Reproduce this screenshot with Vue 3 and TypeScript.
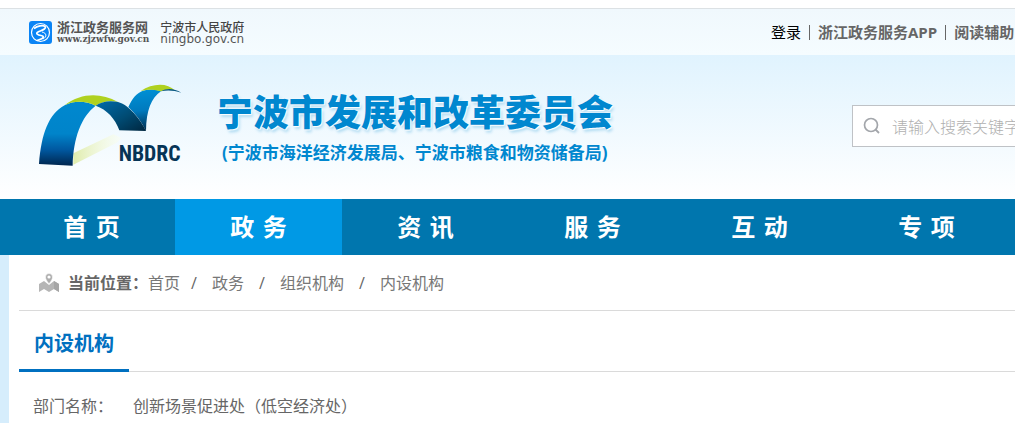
<script setup lang="ts">
import { ref } from 'vue'

const navItems: string[] = ['首 页', '政 务', '资 讯', '服 务', '互 动', '专 项']
const activeNav = ref<number>(1)
const crumbs: string[] = ['首页', '政务', '组织机构', '内设机构']
const keyword = ref<string>('')
</script>

<template>
  <div class="page">
    <div class="topbar">
      <div class="portals">
        <a class="portal service" href="#">
          <svg class="portal-mark" viewBox="0 0 23 23" aria-hidden="true">
            <rect width="23" height="23" rx="3" fill="#0a84f5" />
            <circle cx="11.5" cy="11.5" r="9" fill="none" stroke="#fff" stroke-width="1.2" />
            <path d="M5 7.500C8 5 14 3.500 16 5.500C18 8 12 9.500 9 11C6 12.500 9 14 12 14.500C16 15.200 15 17.500 8 19.500" fill="none" stroke="#fff" stroke-width="1.7" />
            <path d="M13 11C18 12 18 16 14 18" fill="none" stroke="#fff" stroke-width="1" />
          </svg>
          <span class="portal-text">
            <span class="service-name">浙江政务服务网</span>
            <span class="service-url">www.zjzwfw.gov.cn</span>
          </span>
        </a>
        <a class="portal city" href="#">
          <span class="city-name">宁波市人民政府</span>
          <span class="city-url">ningbo.gov.cn</span>
        </a>
      </div>
      <div class="links">
        <a class="login" href="#">登录</a>
        <a href="#">浙江政务服务APP</a>
        <a href="#">阅读辅助</a>
      </div>
    </div>

    <header class="banner">
      <a class="brand" href="#">
        <svg class="logo" viewBox="0 0 540 330" role="img" aria-label="NBDRC">
          <defs>
            <linearGradient id="left-arch" x1="0" y1="0" x2="0" y2="1">
              <stop offset="0" stop-color="#0088cf" />
              <stop offset="0.5" stop-color="#0084ca" />
              <stop offset="0.75" stop-color="#0058a0" />
              <stop offset="1" stop-color="#00264e" />
            </linearGradient>
            <linearGradient id="mid-arch" x1="0" y1="0" x2="1" y2="1">
              <stop offset="0" stop-color="#006bab" />
              <stop offset="0.55" stop-color="#004b73" />
              <stop offset="1" stop-color="#00263f" />
            </linearGradient>
            <linearGradient id="right-arch" x1="0.4" y1="0" x2="0.5" y2="1">
              <stop offset="0" stop-color="#0090d5" />
              <stop offset="0.5" stop-color="#007abe" />
              <stop offset="1" stop-color="#002c4d" />
            </linearGradient>
            <linearGradient id="beam" x1="0" y1="0" x2="1" y2="0">
              <stop offset="0" stop-color="#dfecac" />
              <stop offset="1" stop-color="#fcffee" stop-opacity="0.4" />
            </linearGradient>
          </defs>
          <path d="M160 250L280 193L305 204L290 218L160 284Z" fill="url(#beam)" />
          <path d="M57 282C64 191 86 132 134 106C164 90 201 94 227 107C184 139 160 204 158 287Z" fill="url(#left-arch)" />
          <path d="M134 106C184 68 242 68 294 96C268 91 244 96 227 107C201 94 164 90 134 106Z" fill="#afd11f" />
          <path d="M325 111C337 84 351 68 369 62C389 57 406 58 423 64C394 84 379 120 378 183C365 155 346 131 325 111Z" fill="url(#right-arch)" />
          <path d="M227 107C244 95 268 90 294 96C311 101 324 110 342 130C358 148 370 166 378 183L298 181C285 145 261 119 227 107Z" fill="url(#mid-arch)" />
          <path d="M362 63C398 38 443 38 464 61C449 56 434 58 423 64C404 58 385 57 362 63Z" fill="#afd11f" />
          <path d="M423 64C441 54 462 55 484 68C462 61 441 60 423 64Z" fill="#075780" />
          <text x="296" y="273" class="logo-letters">NBDRC</text>
        </svg>
        <span class="brand-text">
          <strong class="brand-title">宁波市发展和改革委员会</strong>
          <span class="brand-subtitle">(宁波市海洋经济发展局、宁波市粮食和物资储备局)</span>
        </span>
      </a>
      <form class="search" @submit.prevent>
        <svg class="search-icon" viewBox="0 0 18 18" aria-hidden="true">
          <circle cx="8" cy="8" r="6.500" fill="none" stroke="#a3a6ab" stroke-width="1.700" />
          <path d="M12.500 12.500L16 16" stroke="#a3a6ab" stroke-width="1.800" />
        </svg>
        <input v-model="keyword" type="text" aria-label="搜索" placeholder="请输入搜索关键字" />
      </form>
    </header>

    <nav class="nav">
      <a
        v-for="(item, i) in navItems"
        :key="item"
        href="#"
        :class="{ active: i === activeNav }"
        @click.prevent="activeNav = i"
      >{{ item }}</a>
    </nav>

    <div class="body">
      <main class="content">
        <div class="crumbs">
          <svg class="pin" viewBox="0 0 20 20" aria-hidden="true">
            <path d="M0 11L5 8L10 12L15 8L20 11V19L15 16L10 19L5 16L0 19Z" fill="#b5b5b5" />
            <path d="M15 8L20 11V19L15 16Z" fill="#a6a6a6" />
            <path d="M10 11C7 7 6.500 5.500 6.500 4A3.500 3.500 0 0 1 13.500 4C13.500 5.500 13 7 10 11Z" fill="#adadad" stroke="#fff" stroke-width="0.600" />
            <circle cx="10" cy="4" r="1.600" fill="#fff" />
          </svg>
          <strong>当前位置：</strong>
          <template v-for="(crumb, i) in crumbs" :key="crumb">
            <span v-if="i > 0" class="slash">/</span>
            <a href="#">{{ crumb }}</a>
          </template>
        </div>
        <div class="heading"><h2>内设机构</h2></div>
        <dl class="detail">
          <dt>部门名称：</dt>
          <dd>创新场景促进处（低空经济处）</dd>
        </dl>
      </main>
    </div>
  </div>
</template>

<style>
body {
  margin: 0;
  overflow: hidden;
}
</style>

<style scoped>
.page {
  padding-top: 8px;
  overflow: hidden;
  white-space: nowrap;
  background: #fff;
  color: #666;
  font-family: "Open Sans", "Noto Sans CJK SC", sans-serif;
  font-size: 16px;
}
a {
  color: inherit;
  text-decoration: none;
}
.topbar {
  display: grid;
  grid-template-columns: 1fr 244px;
  align-items: center;
  height: 46px;
  border-top: 1px solid #dce1e4;
  background: linear-gradient(#f0f8fd, #f5fcff);
}
.portals {
  display: flex;
  align-items: center;
  gap: 11px;
  padding-left: 29px;
}
.portal {
  display: flex;
  color: #555;
}
.service {
  align-items: center;
  gap: 5px;
}
.portal-mark {
  width: 23px;
  height: 23px;
}
.portal-text,
.city {
  flex-direction: column;
}
.portal-text {
  display: flex;
}
.service-name {
  font: bold 13px/14px "Noto Sans CJK SC", sans-serif;
}
.service-url {
  font: bold 9px/10px "DejaVu Serif", serif;
}
.city-name {
  font: 500 12px/13px "Noto Sans CJK SC", sans-serif;
  color: #444;
}
.city-url {
  font: 12px/12px "DejaVu Sans", sans-serif;
}
.links {
  display: flex;
  align-items: center;
  font-size: 15px;
  font-weight: bold;
  line-height: 15px;
}
.links a + a {
  margin-left: 8px;
  padding-left: 8px;
  border-left: 1px solid #666;
}
.links .login {
  color: #000;
  font-weight: 400;
}
.banner {
  display: grid;
  grid-template-columns: 1fr 163px;
  height: 144px;
  background: linear-gradient(#e0f3fe, #fff);
}
.brand {
  display: flex;
  gap: 17px;
  padding: 15px 0 0 20px;
}
.logo {
  width: 180px;
  height: 110px;
}
.logo-letters {
  font: bold 65px "Roboto Condensed", "Roboto", sans-serif;
  fill: #063456;
}
.brand-text {
  display: flex;
  flex-direction: column;
  padding-top: 21px;
  color: #0087cf;
}
.brand-title {
  font-size: 36px;
  font-weight: 900;
  line-height: 44px;
  text-shadow: 0 0 2px #fff, 1px 1px 1px #fff, 2px 3px 3px #b1dcf2;
}
.brand-subtitle {
  padding: 5px 0 0 5px;
  font-size: 17px;
  font-weight: bold;
  line-height: 26px;
}
.search {
  display: flex;
  align-items: center;
  box-sizing: border-box;
  width: 280px;
  height: 42px;
  margin-top: 50px;
  padding-left: 10px;
  gap: 11px;
  border: 1px solid #bfc2c6;
  background: #fff;
}
.search-icon {
  flex: none;
  width: 18px;
  height: 18px;
}
.search input {
  width: 220px;
  padding: 0;
  border: 0;
  outline: 0;
  background: none;
  color: #555;
  font: 300 16px/24px "Noto Sans CJK SC", sans-serif;
}
.search input::placeholder {
  color: #b0b0b0;
}
.nav {
  display: flex;
  height: 56px;
  padding-left: 8px;
  background: #0076ae;
}
.nav a {
  flex: 0 0 167px;
  color: #fff;
  font: bold 24px/58px "DejaVu Sans", "Noto Sans CJK SC", sans-serif;
  text-align: center;
}
.nav .active {
  background: #0099e5;
}
.body {
  padding-left: 9px;
  background: #d6edfc;
}
.content {
  min-height: 168px;
  padding-left: 10px;
  background: #fff;
}
.crumbs {
  display: flex;
  align-items: center;
  height: 55px;
  padding-left: 20px;
  border-bottom: 1px solid #dadada;
  line-height: 22px;
}
.pin {
  width: 20px;
  height: 20px;
  margin-right: 9px;
}
.crumbs a {
  color: #777;
}
.slash {
  width: 6px;
  margin: 0 15px 0 11px;
}
.slash ~ .slash {
  margin-left: 15px;
}
.heading {
  display: flex;
  height: 60px;
  border-bottom: 1px solid #dadada;
}
.heading h2 {
  box-sizing: border-box;
  height: 61px;
  margin: 0;
  padding: 0 15px;
  border-bottom: 3px solid #0070c0;
  color: #0070c0;
  font-size: 20px;
  line-height: 66px;
}
.detail {
  display: flex;
  gap: 20px;
  margin: 0;
  padding: 20px 0 0 14px;
  line-height: 28px;
}
.detail dd {
  margin: 0;
}
</style>
